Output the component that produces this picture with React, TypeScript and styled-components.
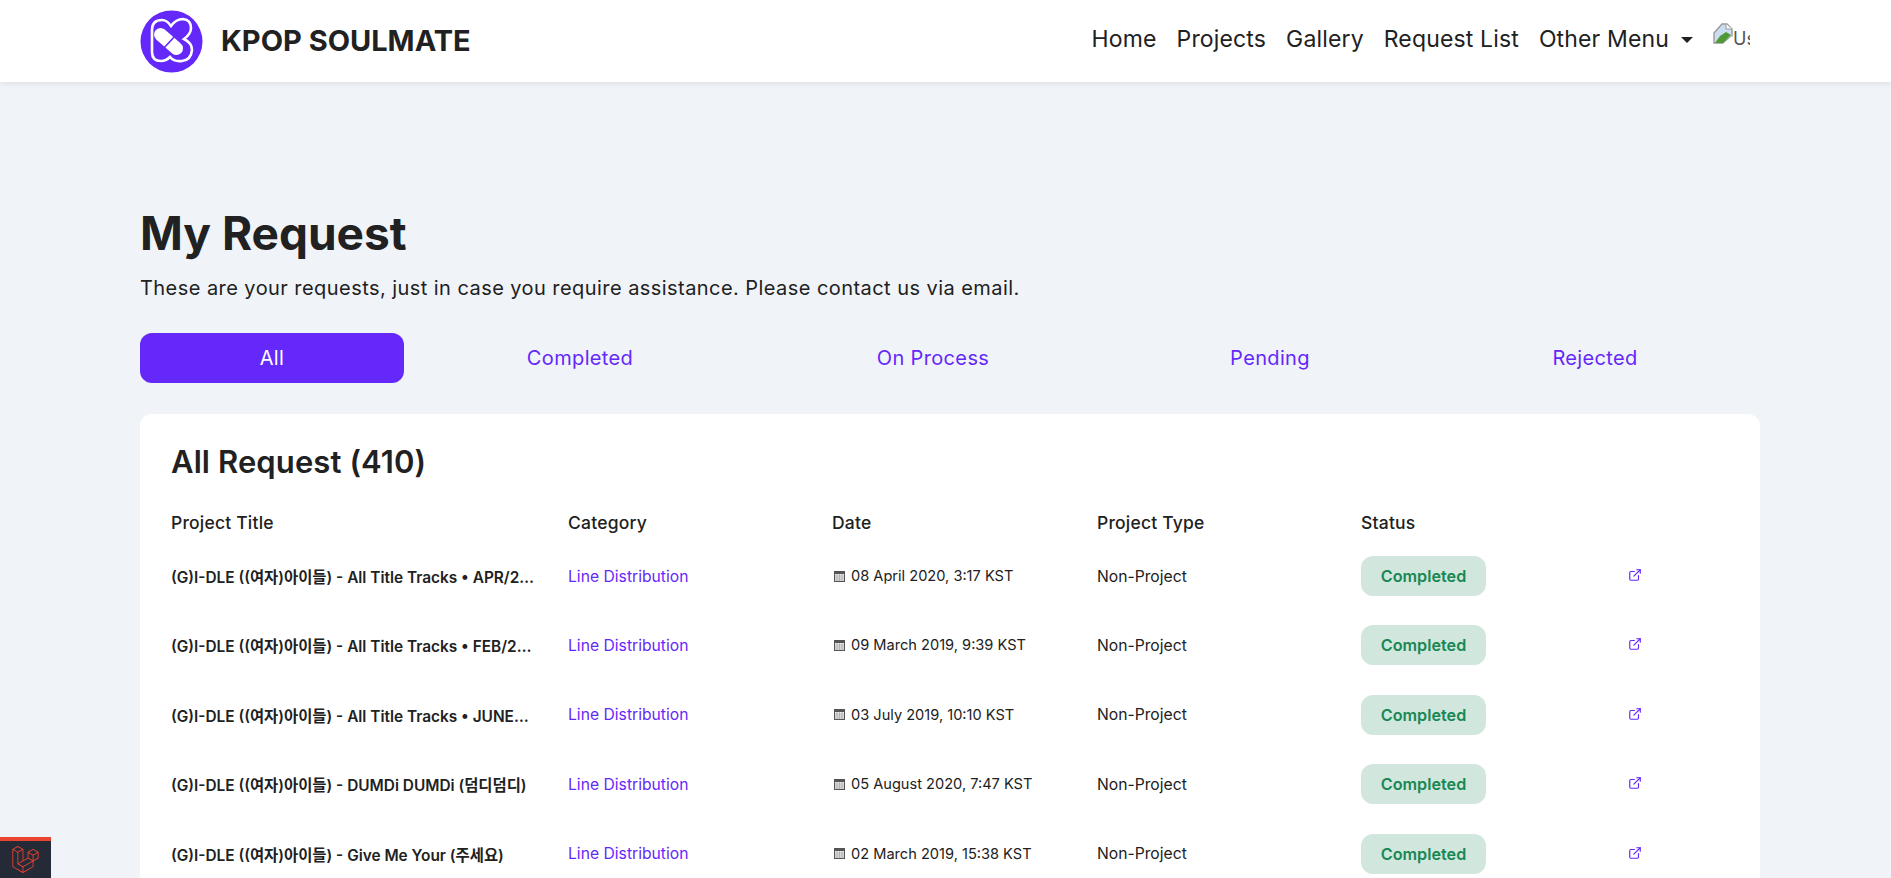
import React from "react";
import styled, { createGlobalStyle } from "styled-components";
import { ExternalLink } from "lucide-react";
import { SiLaravel } from "react-icons/si";

const font = `"Inter", "Noto Sans CJK KR", sans-serif`;

const GlobalStyle = createGlobalStyle`
  html, body {
    margin: 0;
    height: 100%;
    overflow: hidden;
    background: #f0f4f9;
    font-family: ${font};
    color: #212121;
  }
  * { box-sizing: border-box; }
`;

const Navbar = styled.nav`
  height: 82px;
  background: #fff;
  box-shadow: 0 1px 6px rgba(0, 0, 0, 0.1);
  padding: 0 141px 0 140px;
  display: flex;
  align-items: center;
  justify-content: space-between;
`;

const Brand = styled.div`
  display: flex;
  align-items: center;
  gap: 18px;
`;

const BrandName = styled.span`
  font-size: 29px;
  font-weight: 700;
  margin-bottom: 2px;
`;

const NavLinks = styled.div`
  display: flex;
  align-items: center;
  gap: 20px;
  padding-bottom: 5px;
  font-size: 23px;
  letter-spacing: 0.15px;
`;

const Caret = styled.span`
  width: 0;
  height: 0;
  margin-left: -8px;
  margin-top: 2px;
  border-top: 6px solid #212121;
  border-left: 6px solid transparent;
  border-right: 6px solid transparent;
`;

const BrokenImage = styled.div`
  width: 37px;
  height: 32px;
  display: flex;
  align-items: flex-start;
  overflow: hidden;
  font-size: 18px;
  line-height: 32px;
  color: #555;
`;

const Main = styled.main`
  padding: 122px 131px 0 140px;
`;

const Heading = styled.h1`
  margin: 0;
  font-size: 46px;
  line-height: 58px;
  font-weight: 700;
`;

const Lead = styled.p`
  margin: 13px 0 0;
  font-size: 20px;
  letter-spacing: 0.44px;
  line-height: 27px;
`;

const Tabs = styled.div`
  margin-top: 31px;
  display: grid;
  grid-template-columns: 264px 352px 354px 320px 330px;
`;

const Tab = styled.div<{ $active?: boolean }>`
  height: 50px;
  display: flex;
  align-items: center;
  justify-content: center;
  border-radius: 12px;
  font-size: 20px;
  letter-spacing: 0.35px;
  color: ${(p) => (p.$active ? "#fff" : "#6528fa")};
  background: ${(p) => (p.$active ? "#6528fa" : "transparent")};
`;

const Card = styled.section`
  margin-top: 31px;
  background: #fff;
  border-radius: 12px;
  padding: 28px 31px 0;
`;

const CardTitle = styled.h2`
  margin: 0;
  font-size: 31px;
  letter-spacing: 0.1px;
  line-height: 40px;
  font-weight: 600;
`;

const Grid = styled.div`
  display: grid;
  grid-template-columns: 397px 264px 265px 264px 267px 30px;
  align-items: center;
`;

const HeadRow = styled(Grid)`
  margin-top: 22px;
  height: 37.4px;
  font-size: 17.5px;
  letter-spacing: 0.2px;
  font-weight: 500;
`;

const Row = styled(Grid)`
  height: 69.4px;
  font-size: 15.7px;
`;

const TitleCell = styled.div`
  font-weight: 600;
  font-size: 15.4px;
  width: 363px;
  white-space: nowrap;
  overflow: hidden;
  text-overflow: ellipsis;
`;

const CategoryLink = styled.span`
  color: #6528fa;
`;

const DateCell = styled.div`
  display: flex;
  align-items: center;
  gap: 6px;
  padding-left: 2px;
  font-size: 14.6px;
`;

const Status = styled.span`
  width: 125px;
  height: 40px;
  display: flex;
  align-items: center;
  justify-content: center;
  border-radius: 12px;
  background: #d1e7dd;
  color: #198754;
  font-size: 16.2px;
  font-weight: 600;
`;

const OpenLink = styled.span`
  display: flex;
  color: #6528fa;
  margin-bottom: 2px;
`;

const DebugBar = styled.div`
  position: fixed;
  left: 0;
  bottom: 0;
  width: 51px;
  height: 41px;
  background: #252a37;
  border-top: 4px solid #eb4432;
  display: flex;
  align-items: center;
  justify-content: center;
  color: #eb4432;
`;

const Logo = () => (
  <svg width="63" height="63" viewBox="0 0 63 63">
    <circle cx="31.5" cy="31.5" r="31" fill="#6528fa" />
    <path
      d="M12 20Q12 10 22 10Q27 10 31 16Q36 9 43 9Q51 10 51 18Q51 24 44 29Q52 33 52 40Q51 50 42 51Q34 52 30 47Q26 51 21 51Q12 51 12 42Z"
      fill="none"
      stroke="#fff"
      strokeWidth="2.6"
    />
    <path d="M20.5 24.5L36.5 38.5" stroke="#fff" strokeWidth="13" strokeLinecap="round" />
    <path d="M23 39L36 25" stroke="#6528fa" strokeWidth="1.6" />
  </svg>
);

const BrokenIcon = () => (
  <svg width="20" height="21" viewBox="0 0 20 21" style={{ flexShrink: 0 }}>
    <path d="M1 10L9 1h5l5 5v7l-9 7H1z" fill="#c9def2" stroke="#9a9a9a" strokeWidth="1.4" />
    <path d="M2 20l5-7 6-4 5 3-8 8z" fill="#4f9a34" />
    <path d="M13 1v5h6" fill="#fff" stroke="#9a9a9a" />
    <path d="M11 20l8-7v7z" fill="#fff" />
  </svg>
);

const CalendarIcon = () => (
  <svg width="11" height="11" viewBox="0 0 11 11" style={{ flexShrink: 0 }}>
    <rect x="0.5" y="0.5" width="10" height="10" fill="#eee" stroke="#555" />
    <rect x="0.5" y="0.5" width="10" height="2.5" fill="#555" />
    <path d="M1 5h9M1 7h9M1 9h9M3 3v7M5.5 3v7M8 3v7" stroke="#999" strokeWidth="0.6" />
  </svg>
);

const rows = [
  { title: "(G)I-DLE ((여자)아이들) - All Title Tracks • APR/2020 Edition Full Version", date: "08 April 2020, 3:17 KST" },
  { title: "(G)I-DLE ((여자)아이들) - All Title Tracks • FEB/2019 Edition Full Version", date: "09 March 2019, 9:39 KST" },
  { title: "(G)I-DLE ((여자)아이들) - All Title Tracks • JUNE/2019 Edition Full Version", date: "03 July 2019, 10:10 KST" },
  { title: "(G)I-DLE ((여자)아이들) - DUMDi DUMDi (덤디덤디)", date: "05 August 2020, 7:47 KST" },
  { title: "(G)I-DLE ((여자)아이들) - Give Me Your (주세요)", date: "02 March 2019, 15:38 KST" },
];

export default function App() {
  return (
    <>
      <GlobalStyle />
      <Navbar>
        <Brand>
          <Logo />
          <BrandName>KPOP SOULMATE</BrandName>
        </Brand>
        <NavLinks>
          <span>Home</span>
          <span>Projects</span>
          <span>Gallery</span>
          <span>Request List</span>
          <span>Other Menu</span>
          <Caret />
          <BrokenImage>
            <BrokenIcon />
            User
          </BrokenImage>
        </NavLinks>
      </Navbar>
      <Main>
        <Heading>My Request</Heading>
        <Lead>These are your requests, just in case you require assistance. Please contact us via email.</Lead>
        <Tabs>
          <Tab $active>All</Tab>
          <Tab>Completed</Tab>
          <Tab>On Process</Tab>
          <Tab>Pending</Tab>
          <Tab>Rejected</Tab>
        </Tabs>
        <Card>
          <CardTitle>All Request (410)</CardTitle>
          <HeadRow>
            <div>Project Title</div>
            <div>Category</div>
            <div>Date</div>
            <div>Project Type</div>
            <div>Status</div>
            <div />
          </HeadRow>
          {rows.map((r) => (
            <Row key={r.title}>
              <TitleCell>{r.title}</TitleCell>
              <CategoryLink>Line Distribution</CategoryLink>
              <DateCell>
                <CalendarIcon />
                {r.date}
              </DateCell>
              <div>Non-Project</div>
              <div>
                <Status>Completed</Status>
              </div>
              <OpenLink>
                <ExternalLink size={14} />
              </OpenLink>
            </Row>
          ))}
        </Card>
      </Main>
      <DebugBar>
        <SiLaravel size={27} />
      </DebugBar>
    </>
  );
}
